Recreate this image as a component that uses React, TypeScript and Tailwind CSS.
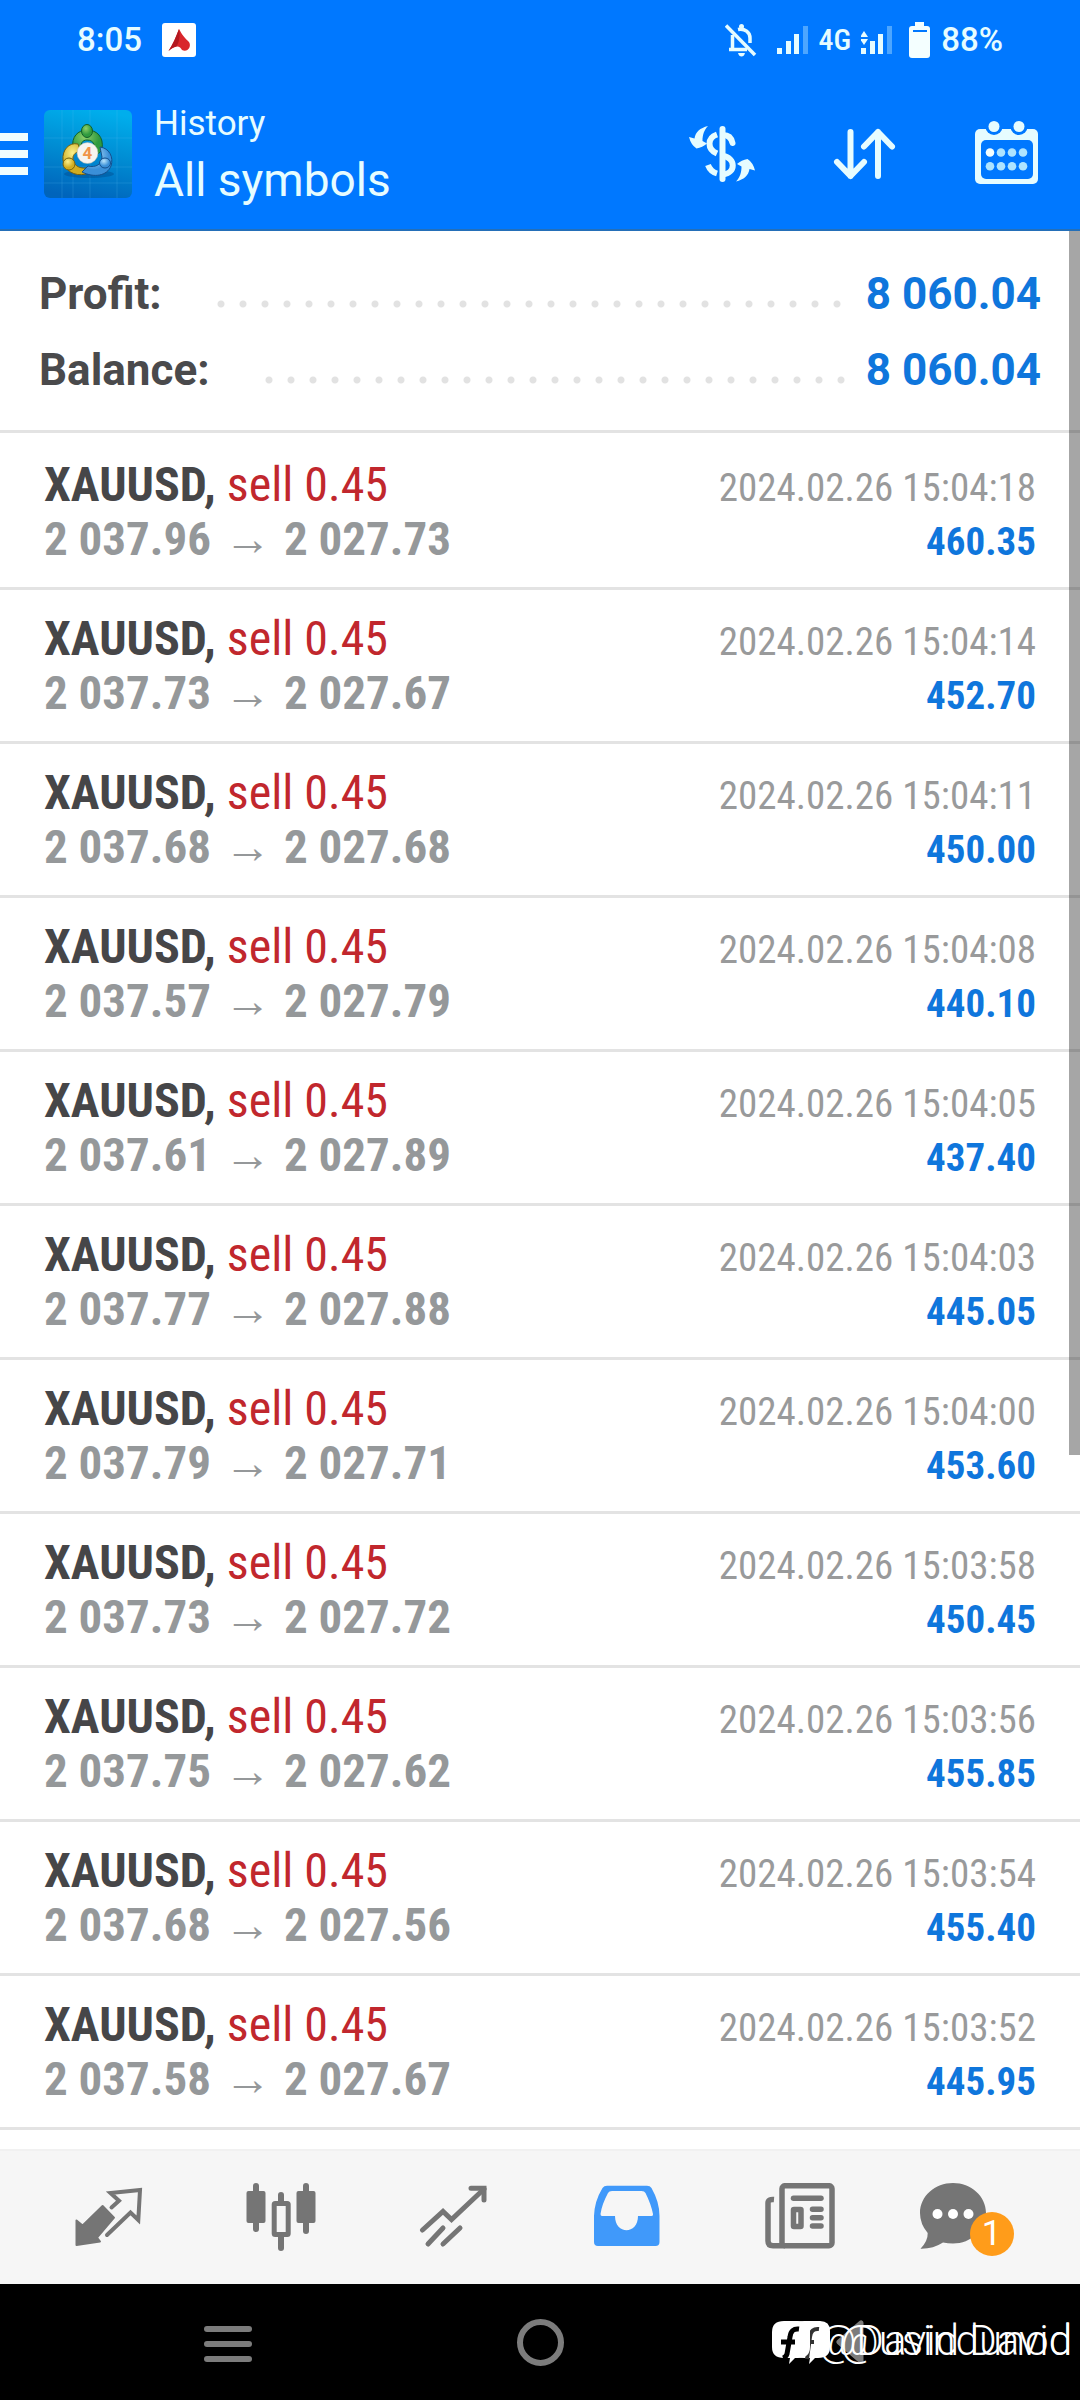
import type { ReactNode } from "react";

const deals = [
  { open: "2 037.96", close: "2 027.73", time: "2024.02.26 15:04:18", profit: "460.35" },
  { open: "2 037.73", close: "2 027.67", time: "2024.02.26 15:04:14", profit: "452.70" },
  { open: "2 037.68", close: "2 027.68", time: "2024.02.26 15:04:11", profit: "450.00" },
  { open: "2 037.57", close: "2 027.79", time: "2024.02.26 15:04:08", profit: "440.10" },
  { open: "2 037.61", close: "2 027.89", time: "2024.02.26 15:04:05", profit: "437.40" },
  { open: "2 037.77", close: "2 027.88", time: "2024.02.26 15:04:03", profit: "445.05" },
  { open: "2 037.79", close: "2 027.71", time: "2024.02.26 15:04:00", profit: "453.60" },
  { open: "2 037.73", close: "2 027.72", time: "2024.02.26 15:03:58", profit: "450.45" },
  { open: "2 037.75", close: "2 027.62", time: "2024.02.26 15:03:56", profit: "455.85" },
  { open: "2 037.68", close: "2 027.56", time: "2024.02.26 15:03:54", profit: "455.40" },
  { open: "2 037.58", close: "2 027.67", time: "2024.02.26 15:03:52", profit: "445.95" },
];

function SignalIcon({ withArrows = false }: { withArrows?: boolean }) {
  return (
    <svg width="32" height="30" viewBox="0 0 32 30" fill="#e6fcff" aria-hidden="true">
      <rect x="0" y="23" width="5" height="6" />
      <rect x="9" y="16" width="5" height="13" />
      <rect x="17" y="9" width="5" height="20" />
      <rect x="26" y="1" width="5" height="28" fill="#4da6ff" />
      {withArrows && (
        <>
          <path d="M3 6 L7 12 H-1 Z" />
          <path d="M3 20 L7 14 H-1 Z" />
        </>
      )}
    </svg>
  );
}

function StatusBar() {
  return (
    <div className="flex h-[79px] items-center justify-between px-[77px] text-[33px] font-medium leading-none text-[#e6fcff]">
      <div className="flex items-center gap-5">
        <span>8:05</span>
        <svg width="34" height="34" viewBox="0 0 34 34" aria-hidden="true">
          <rect width="34" height="34" rx="3" fill="#fff" />
          <path d="M17 6 C20 12 23 15 27 19 C30 24 25 30 20 27 C19 25 17 23 14.500 23.500 C11 24 9 26 6.500 28 C11 21 14 14 17 6Z" fill="#d9262b" />
          <path d="M17 6 C18 11 18 18 14.500 23.500 C11 24 9 26 6.500 28 C11 21 14 14 17 6Z" fill="#b3181f" />
        </svg>
      </div>
      <div className="flex items-center">
        <svg className="mr-5" width="32" height="34" viewBox="0 0 32 34" fill="none" stroke="#e6fcff" strokeWidth="3.500" aria-hidden="true">
          <path d="M7.500 12 V26 M4 26.500 H22 M13 6.500 C20 5 25 9.500 25 15 V20" />
          <circle cx="16.500" cy="3.500" r="2.500" fill="#e6fcff" stroke="none" />
          <path d="M13 30 H20 Q19 33.500 16.500 33.500 T13 30Z" fill="#e6fcff" stroke="none" />
          <path d="M1 2.500 L30 32" />
        </svg>
        <SignalIcon />
        <span className="mx-[10px] font-['Roboto_Condensed',Roboto,sans-serif] text-[30px]">4G</span>
        <SignalIcon withArrows />
        <svg className="ml-4 mr-[10px]" width="22" height="36" viewBox="0 0 22 36" aria-hidden="true">
          <rect x="6" y="0" width="9" height="6" fill="#f4ffff" />
          <rect x="0" y="4" width="21" height="32" rx="3" fill="#f4ffff" />
          <rect x="4" y="8" width="14" height="2" fill="#0078ff" />
        </svg>
        <span>88%</span>
      </div>
    </div>
  );
}

function AppLogo() {
  return (
    <svg width="88" height="88" viewBox="0 0 88 88" aria-hidden="true">
      <defs>
        <linearGradient id="logoBg" x1="0.600" y1="0" x2="0.400" y2="1">
          <stop offset="0" stopColor="#00aeec" />
          <stop offset="0.500" stopColor="#008bd2" />
          <stop offset="1" stopColor="#0064bb" />
        </linearGradient>
        <radialGradient id="logoGreen" cx="0.400" cy="0.300">
          <stop offset="0" stopColor="#8fd06a" />
          <stop offset="1" stopColor="#2f9a3f" />
        </radialGradient>
        <radialGradient id="logoYellow" cx="0.400" cy="0.300">
          <stop offset="0" stopColor="#fbf08a" />
          <stop offset="1" stopColor="#d0ac20" />
        </radialGradient>
        <radialGradient id="logoBlue" cx="0.400" cy="0.300">
          <stop offset="0" stopColor="#b9e4fb" />
          <stop offset="1" stopColor="#3a8fd8" />
        </radialGradient>
      </defs>
      <rect width="88" height="88" rx="6" fill="url(#logoBg)" />
      <path d="M18 0V88M29 0V88M46 0V88M73 0V88M0 28H88M0 57H88M0 73H88" stroke="#5cc4f0" strokeOpacity="0.200" strokeWidth="1" />
      <ellipse cx="45" cy="64" rx="25" ry="4" fill="#00407f" opacity="0.350" />
      <path d="M29 38 C27 27 34 20 43 20 C53 20 60 27 58 39 C56 44 52 45 49 43 C52 36 50 30 43 30 C38 30 36 34 38 39Z" fill="url(#logoGreen)" stroke="#12602a" strokeWidth="1" />
      <path d="M34 34 C25 32 18 40 19 50 C20 60 30 67 42 64 L43 58 C34 59 28 54 29 47 C30 43 34 41 37 42Z" fill="url(#logoYellow)" stroke="#75600f" strokeWidth="1" />
      <path d="M56 37 C65 38 70 47 67 56 C63 66 50 68 38 62 L44 56 C52 58 58 54 58 47Z" fill="url(#logoBlue)" stroke="#144f8d" strokeWidth="1" />
      <ellipse cx="43" cy="21" rx="5.500" ry="6.500" fill="url(#logoGreen)" stroke="#12602a" strokeWidth="1" />
      <ellipse cx="25" cy="54" rx="6" ry="6" fill="url(#logoYellow)" stroke="#75600f" strokeWidth="1" />
      <ellipse cx="61" cy="53" rx="5.500" ry="5" fill="url(#logoBlue)" stroke="#144f8d" strokeWidth="1" />
      <circle cx="43.500" cy="43" r="10.500" fill="#f6f4f0" stroke="#b9b9a8" strokeWidth="0.500" />
      <text x="43.500" y="49" textAnchor="middle" fontFamily="Roboto, sans-serif" fontSize="17" fontWeight="700" fill="#f0954a">4</text>
    </svg>
  );
}

function CurrencyIcon() {
  return (
    <svg width="70" height="70" viewBox="0 0 70 70" fill="none" stroke="#e6fcff" strokeWidth="6" aria-hidden="true">
      <path d="M35.500 10 V60" strokeLinecap="round" />
      <path d="M30 15.500 C20 19 20 30 30 34.500" />
      <path d="M36 16 C41 16 44.500 19 45.500 24" strokeLinecap="round" />
      <path d="M36 37 C49 39 49 54 36 55.500" />
      <path d="M21 46 C22.500 50 25 53 30 54.500" />
      <g fill="#e6fcff" stroke="none">
        <path d="M21 7 C13 9 8.500 13 7.500 19.500 L2 18 Q4 26 9.500 29.500 Q15.500 28.500 20 24.500 L15.500 22 C15.500 16 17 11 21 7Z" />
        <path transform="rotate(180 35 34.800)" d="M21 7 C13 9 8.500 13 7.500 19.500 L2 18 Q4 26 9.500 29.500 Q15.500 28.500 20 24.500 L15.500 22 C15.500 16 17 11 21 7Z" />
      </g>
    </svg>
  );
}

function SortIcon() {
  return (
    <svg width="70" height="70" viewBox="0 0 70 70" fill="none" stroke="#e6fcff" strokeWidth="6" strokeLinecap="round" strokeLinejoin="round" aria-hidden="true">
      <path d="M21.500 13 V57 M8 43 L21.500 57 L35 43" />
      <path d="M49 57 V13 M35 27.500 L49 13 L63 27.500" />
    </svg>
  );
}

function CalendarIcon() {
  return (
    <svg width="70" height="70" viewBox="0 0 70 70" aria-hidden="true">
      <rect x="4" y="10" width="63" height="55" rx="5" fill="#e6fcff" />
      <rect x="10" y="21" width="52" height="39" rx="5" fill="#0078ff" />
      {[23, 48].map((x) => (
        <g key={x}>
          <circle cx={x} cy="7.500" r="8.500" fill="#0078ff" />
          <circle cx={x} cy="7.500" r="5.500" fill="#e6fcff" />
        </g>
      ))}
      {[19, 30, 41, 52].map((x) => (
        <g key={x} fill="#aee4ff">
          <circle cx={x} cy="33.500" r="4.300" fill={x === 19 ? "#f4ffff" : "#aee4ff"} />
          <circle cx={x} cy="47.300" r="4.300" />
        </g>
      ))}
    </svg>
  );
}

function Toolbar() {
  return (
    <div className="flex h-[150px] items-center">
      <button type="button" aria-label="Menu" className="flex flex-col gap-[9px]">
        <span className="h-2 w-7 bg-[#f0fdff]" />
        <span className="h-2 w-7 bg-[#f0fdff]" />
        <span className="h-2 w-7 bg-[#f0fdff]" />
      </button>
      <div className="ml-4">
        <AppLogo />
      </div>
      <div className="ml-[22px] flex flex-1 flex-col pt-2 text-[#e6fcff]">
        <span className="text-[35px] leading-[44px]">History</span>
        <h1 className="text-[46px] leading-[68px]">All symbols</h1>
      </div>
      <div className="flex gap-[72px] pr-[39px]">
        <button type="button" aria-label="Currency"><CurrencyIcon /></button>
        <button type="button" aria-label="Sort"><SortIcon /></button>
        <button type="button" aria-label="Calendar"><CalendarIcon /></button>
      </div>
    </div>
  );
}

function SummaryRow({ label, value }: { label: string; value: string }) {
  return (
    <div className="flex h-[76px] items-center text-[44px] font-bold leading-[76px]">
      <dt className="text-[#4a4a4c]">{label}</dt>
      <div className="ml-12 mr-5 mt-[19px] h-2 flex-1 bg-[radial-gradient(circle,#e2e2e2_3px,transparent_4px)] bg-[length:22px_8px] bg-repeat-x" />
      <dd className="text-[#0f76dc]">{value}</dd>
    </div>
  );
}

function DealRow({ open, close, time, profit }: (typeof deals)[number]) {
  return (
    <li className="h-[154px] border-b-[3px] border-[#e3e3e3] px-11 pt-[22px] font-['Roboto_Condensed',Roboto,'Liberation_Sans',sans-serif]">
      <div className="flex h-[54px] items-baseline justify-between leading-[54px]">
        <span className="text-[48px] text-[#c1272d]">
          <b className="font-bold text-[#464648]">XAUUSD,</b> sell 0.45
        </span>
        <time className="text-[39px] text-[#999a9b]">{time}</time>
      </div>
      <div className="flex h-[54px] items-baseline justify-between font-bold leading-[54px]">
        <span className="flex items-baseline text-[47px] text-[#95989a]">
          {open}
          <span className="mx-[13px]">→</span>
          {close}
        </span>
        <span className="text-[39px] text-[#0f76dc]">{profit}</span>
      </div>
    </li>
  );
}

function Tab({ label, children }: { label: string; children: ReactNode }) {
  return (
    <button type="button" aria-label={label} className="flex items-center justify-center">
      {children}
    </button>
  );
}

function TabBar() {
  return (
    <nav className="grid h-[135px] grid-cols-6 border-t-2 border-[#f1f1f1] bg-[#f6f6f6] px-[21px]">
      <Tab label="Quotes">
        <svg width="70" height="70" viewBox="0 0 70 70" aria-hidden="true">
          <path d="M3.500 37.500 V62 L27 58.500 L24 54.700 L41 34.700 L29.600 23 L9.600 42.500Z" fill="#757575" stroke="#757575" strokeWidth="2" strokeLinejoin="round" />
          <path d="M38.500 24.500 L46 17.700 L37.500 10 L67 7 L65.300 37 L57.500 29.500 L34 52" fill="none" stroke="#757575" strokeWidth="4" strokeLinejoin="miter" strokeLinecap="round" />
        </svg>
      </Tab>
      <Tab label="Chart">
        <svg width="70" height="70" viewBox="0 0 70 70" fill="#757575" aria-hidden="true">
          <rect x="7" y="0" width="6" height="49" rx="3" />
          <rect x="0.500" y="8" width="19" height="32" rx="2" />
          <rect x="32" y="9" width="6" height="59" rx="3" />
          <rect x="28.200" y="20.500" width="14" height="31" rx="1" fill="#f6f6f6" stroke="#757575" strokeWidth="5" />
          <rect x="57" y="0" width="6" height="51" rx="3" />
          <rect x="50.500" y="8" width="19" height="32" rx="2" />
        </svg>
      </Tab>
      <Tab label="Trade">
        <svg width="70" height="70" viewBox="0 0 70 70" fill="none" stroke="#757575" strokeWidth="5" strokeLinecap="round" aria-hidden="true">
          <path d="M3.500 47 L24 28.500 L32.500 36.500 L65 6" strokeLinejoin="miter" />
          <path d="M52 5.300 H65 V17" />
          <path d="M24 45 L9 61 M41 45 L24 61" />
        </svg>
      </Tab>
      <Tab label="History">
        <svg width="70" height="70" viewBox="0 0 70 70" aria-hidden="true">
          <path fillRule="evenodd" fill="#4099fa" d="M15 2.700 H55 Q58 2.700 59.500 5 Q67.500 19 67.500 33 V59 Q67.500 63 63.500 63 H6 Q2 63 2 59 V33 Q2.500 18 10.500 5 Q12 2.700 15 2.700Z M20 8 Q17 8 16 10 Q10 21 8.500 31 Q8.500 33 10 33 H23 C23 52 46 52 46 33 H59.500 Q61.500 33 61 31 Q59 21 53.500 10 Q52.500 8 49.500 8Z" />
        </svg>
      </Tab>
      <Tab label="News">
        <svg width="70" height="70" viewBox="0 0 70 70" fill="none" stroke="#757575" strokeWidth="5.500" strokeLinecap="round" aria-hidden="true">
          <rect x="17" y="2.700" width="50" height="60" rx="3" />
          <path d="M9 16.500 Q3 16 3 20 V58 Q3 62.700 8 62.700 H20" strokeLinecap="butt" />
          <path d="M28.500 15.300 H56" />
          <rect x="28.500" y="26.500" width="7.500" height="17" rx="0.500" />
          <path d="M47.500 26.300 H56 M47.500 34.700 H56 M47.500 43 H56" />
        </svg>
      </Tab>
      <Tab label="Messages, 1 new">
        <span className="relative h-[70px] w-[110px]">
          <svg width="70" height="70" viewBox="0 0 70 70" aria-hidden="true">
            <path d="M35 0 C53 0 68 13 68 30 C68 47 53 60.500 35 60.500 Q30 60.500 25 59.500 Q15 66 2.500 65.700 Q10 58 9.700 50 Q2 41 2 30 C2 13 17 0 35 0Z" fill="#757575" />
            <circle cx="19.500" cy="31" r="5" fill="#fff" />
            <circle cx="35" cy="31" r="5" fill="#fff" />
            <circle cx="50.500" cy="31" r="5" fill="#fff" />
          </svg>
          <span className="absolute left-[52px] top-[29px] flex h-11 w-11 items-center justify-center rounded-full bg-[#ff9c1a] text-[35px] leading-none text-white">
            1
          </span>
        </span>
      </Tab>
    </nav>
  );
}

function ShareMark() {
  return (
    <svg width="62" height="46" viewBox="0 0 62 46" aria-hidden="true">
      <g transform="translate(20 0)">
        <path d="M12 0 H28 Q38 0 38 10 V26 Q38 37 26 37 H23 L17 43 L18 37 H12 Q0 37 0 26 V11 Q0 0 12 0Z" fill="#fff" />
        <path d="M27 8 Q19 7 18 16 L15 38 M9 21 H22" fill="none" stroke="#333" strokeWidth="4" />
      </g>
      <path d="M12 0 H26 Q38 0 38 10 V26 Q38 37 26 37 H23 L17 43 L18 37 H12 Q0 37 0 26 V11 Q0 0 12 0Z" fill="#fff" />
      <path d="M27 8 Q19 7 18 16 L15 33 Q14 36 11 37 M9 21 H23" fill="none" stroke="#000" strokeWidth="5" />
    </svg>
  );
}

function SystemNav() {
  return (
    <footer className="relative grid h-[116px] grid-cols-3 bg-black px-[72px]">
      <button type="button" aria-label="Recent apps" className="flex flex-col items-center justify-center gap-[9px] pt-1">
        <span className="h-[6px] w-12 rounded-full bg-[#7c7c7c]" />
        <span className="h-[6px] w-12 rounded-full bg-[#7c7c7c]" />
        <span className="h-[6px] w-12 rounded-full bg-[#7c7c7c]" />
      </button>
      <button type="button" aria-label="Home" className="flex items-center justify-center">
        <span className="h-[47px] w-[47px] rounded-full border-[6px] border-[#7c7c7c]" />
      </button>
      <button type="button" aria-label="Back" className="flex items-center justify-center">
        <svg width="36" height="44" viewBox="0 0 36 44" aria-hidden="true">
          <path d="M27 3 V41 L5 22Z" fill="#7c7c7c" stroke="#7c7c7c" strokeWidth="5" strokeLinejoin="round" />
        </svg>
      </button>
      <div className="absolute right-2 top-[33px] flex text-[42px] font-light leading-[48px] text-white">
        <div className="-mr-4 pt-1">
          <ShareMark />
        </div>
        <span>@David David</span>
        <span className="absolute right-0 top-0">@usindunod</span>
      </div>
    </footer>
  );
}

export default function App() {
  return (
    <div className="flex min-h-screen flex-col bg-white font-['Roboto',sans-serif]">
      <header className="border-b-2 border-[#246fb8] bg-[#0078ff]">
        <StatusBar />
        <Toolbar />
      </header>
      <main className="relative flex-1">
        <dl className="border-b-[3px] border-[#e3e3e3] px-[39px] pb-[22px] pt-[25px]">
          <SummaryRow label="Profit:" value="8 060.04" />
          <SummaryRow label="Balance:" value="8 060.04" />
        </dl>
        <ul className="pt-[3px]">
          {deals.map((deal) => (
            <DealRow key={deal.time} {...deal} />
          ))}
        </ul>
        <div className="absolute right-0 top-0 h-[1224px] w-[11px] bg-black/35" />
      </main>
      <TabBar />
      <SystemNav />
    </div>
  );
}
